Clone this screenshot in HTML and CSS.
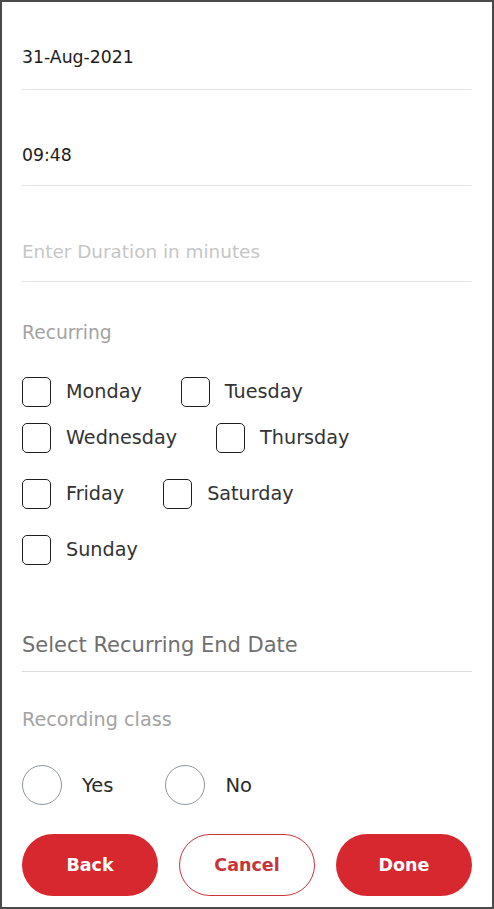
FILE: index.html
```html
<!DOCTYPE html>
<html lang="en">
<head>
<meta charset="utf-8">
<title>Schedule class</title>
<link rel="stylesheet" href="styles.css">
</head>
<body>
<div class="frame">
  <div class="field first"><span class="value">31-Aug-2021</span></div>
  <div class="field"><span class="value">09:48</span></div>
  <div class="field"><span class="placeholder">Enter Duration in minutes</span></div>

  <div class="section-label recurring">Recurring</div>

  <div class="days">
    <div class="day-row tight">
      <label class="day"><span class="box"></span><span class="day-name">Monday</span></label>
      <label class="day"><span class="box"></span><span class="day-name">Tuesday</span></label>
    </div>
    <div class="day-row">
      <label class="day"><span class="box"></span><span class="day-name">Wednesday</span></label>
      <label class="day"><span class="box"></span><span class="day-name">Thursday</span></label>
    </div>
    <div class="day-row">
      <label class="day"><span class="box"></span><span class="day-name">Friday</span></label>
      <label class="day"><span class="box"></span><span class="day-name">Saturday</span></label>
    </div>
    <div class="day-row">
      <label class="day"><span class="box"></span><span class="day-name">Sunday</span></label>
    </div>
  </div>

  <div class="end-date">Select Recurring End Date</div>

  <div class="section-label recording">Recording class</div>

  <div class="radios">
    <label class="radio"><span class="circle"></span><span class="radio-name">Yes</span></label>
    <label class="radio"><span class="circle"></span><span class="radio-name">No</span></label>
  </div>

  <div class="actions">
    <button class="btn solid">Back</button>
    <button class="btn outline">Cancel</button>
    <button class="btn solid">Done</button>
  </div>
</div>
</body>
</html>
```

FILE: styles.css
```css
* { box-sizing: border-box; }
html, body { margin: 0; padding: 0; background: #fff; }
body { font-family: "DejaVu Sans", "Liberation Sans", sans-serif; }

.frame {
  width: 494px;
  height: 909px;
  border: 2px solid #4a4a4a;
  padding: 0 20px;
  display: flex;
  flex-direction: column;
  overflow: hidden;
}

.field {
  padding-top: 53px;
  padding-bottom: 18px;
  border-bottom: 1px solid #e2e4ea;
  line-height: 24px;
  font-size: 17.3px;
}
.field.first { padding-top: 43px; padding-bottom: 20px; }
.value { color: #1c1c1c; }
.placeholder { color: #c6c6c6; font-size: 18.4px; }
.field:nth-child(3) { padding-top: 54px; padding-bottom: 17px; }

.section-label {
  font-size: 18.7px;
  line-height: 24px;
  color: #a3a3a3;
}
.recurring { margin-top: 39px; }

.days { margin-top: 32px; display: flex; flex-direction: column; gap: 26px; }
.day-row { display: flex; align-items: center; gap: 39px; height: 30px; }
.day-row.tight { margin-bottom: -10px; }
.day { display: flex; align-items: center; gap: 15px; }
.box {
  width: 29px;
  height: 30px;
  border: 1.6px solid #1f1f1f;
  border-radius: 5px;
  flex: none;
}
.day-name { font-size: 19.2px; color: #333; line-height: 24px; }

.end-date {
  margin-top: 66px;
  font-size: 21px;
  line-height: 28px;
  color: #6f6f6f;
  padding-bottom: 12px;
  border-bottom: 1.5px solid #dcdcdc;
}

.recording { margin-top: 36px; font-size: 19.2px; }

.radios { margin-top: 33px; display: flex; gap: 52px; }
.radio { display: flex; align-items: center; gap: 20px; }
.circle {
  width: 40px;
  height: 40px;
  border-radius: 50%;
  border: 1.5px solid #8f969d;
  flex: none;
}
.radio-name { font-size: 19.5px; color: #2a2a2a; }

.actions {
  margin-top: 29px;
  display: grid;
  grid-template-columns: repeat(3, 1fr);
  gap: 21px;
}
.btn {
  height: 62px;
  border-radius: 31px;
  font-family: "DejaVu Sans", "Liberation Sans", sans-serif;
  font-weight: bold;
  font-size: 17.5px;
  padding: 0;
}
.btn.solid { background: #d7282f; color: #fff; border: none; }
.btn.outline { background: #fff; color: #c9343a; border: 1.5px solid #c9343a; }
```
